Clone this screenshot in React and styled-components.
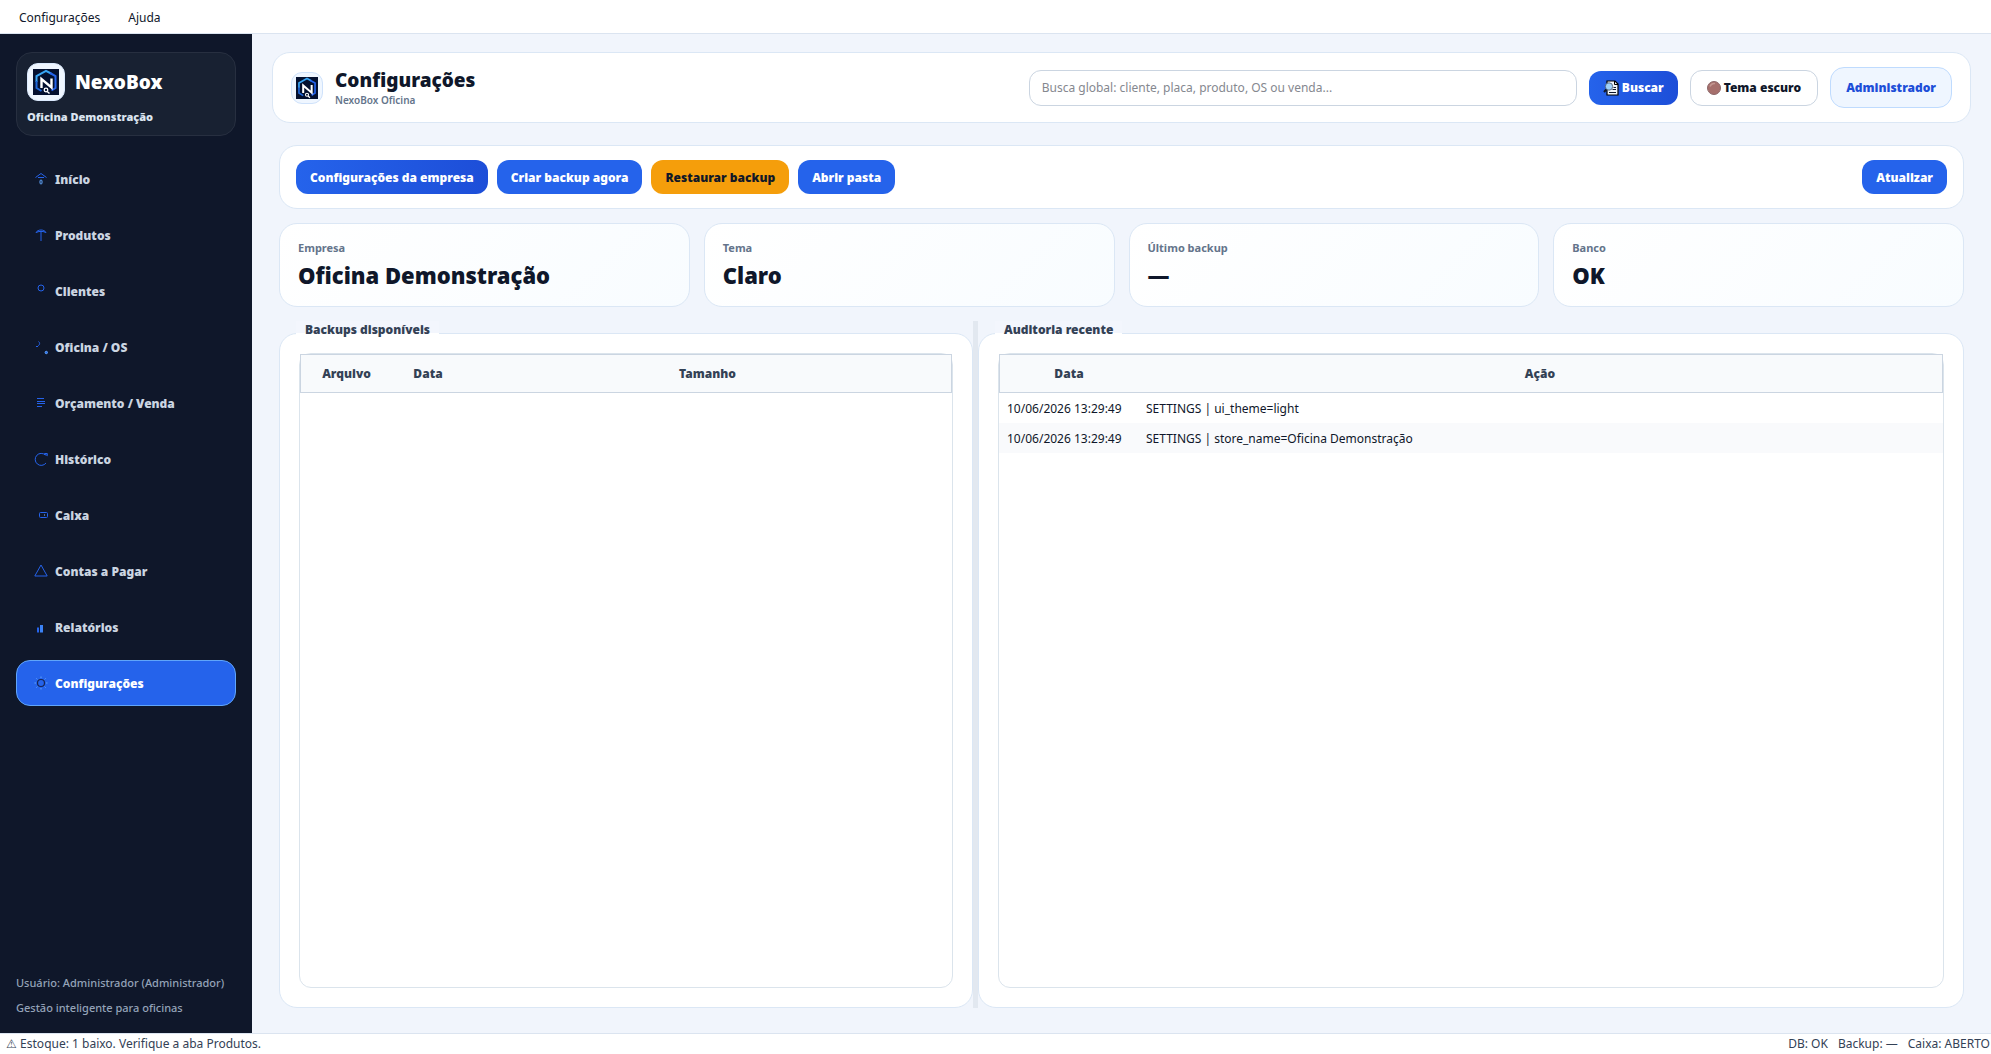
import React from "react";
import styled, { createGlobalStyle } from "styled-components";

const NAV = [
    { name: "Início", icon: "home" },
    { name: "Produtos", icon: "products" },
    { name: "Clientes", icon: "clients" },
    { name: "Oficina / OS", icon: "workshop" },
    { name: "Orçamento / Venda", icon: "quote" },
    { name: "Histórico", icon: "history" },
    { name: "Caixa", icon: "cash" },
    { name: "Contas a Pagar", icon: "bills" },
    { name: "Relatórios", icon: "reports" },
    { name: "Configurações", icon: "settings", active: true },
];

const STATS = [
    { label: "Empresa", value: "Oficina Demonstração" },
    { label: "Tema", value: "Claro" },
    { label: "Último backup", value: "—" },
    { label: "Banco", value: "OK" },
];

const AUDIT = [
    { date: "10/06/2026 13:29:49", action: "SETTINGS | ui_theme=light" },
    { date: "10/06/2026 13:29:49", action: "SETTINGS | store_name=Oficina Demonstração" },
];

const shapes = {
    home: (
        <>
            <path d="M2.5 6.5 8 2.5l5.5 4M5 6.5h6" />
            <rect x="7" y="9" width="2" height="4" rx="1" stroke="#60a5fa" />
        </>
    ),
    products: <path d="M3 5.5C4 3.8 6 3 8 3s4 .8 5 2.5M3 5.5l3-1h4l3 1M8 4.500V14" />,
    clients: <circle cx="8" cy="5" r="3" />,
    workshop: (
        <>
            <path d="M5.500 2.500c2 1.500 1 4-.5 4M3 7.500h2" />
            <circle cx="13.300" cy="13.500" r="1.200" fill="#2563eb" stroke="#60a5fa" />
        </>
    ),
    quote: <path d="M4 3.500h7M4 6.500h8M4 8.500h8M4 11.500h5" />,
    history: (
        <>
            <path d="M12.500 4.200A6 6 0 1 0 13 12" />
            <path d="M11.500 2.500h2.800v2.200z" />
        </>
    ),
    cash: (
        <>
            <rect x="6.500" y="5.500" width="8" height="5" rx="1" />
            <path d="M11 8h1" stroke="#93c5fd" />
        </>
    ),
    bills: <path d="M8 2 14.200 13H1.800z" />,
    reports: (
        <>
            <path d="M5 13.500v-5" stroke="#2563eb" strokeWidth="2" />
            <path d="M8.500 13.500V6" stroke="#3b82f6" strokeWidth="3" />
        </>
    ),
    settings: (
        <>
            <circle cx="8" cy="8" r="3.500" stroke="#172554" strokeWidth="1.200" />
            <path
                d="M8 1.500v1.500M8 13v1.500M1.500 8H3M13 8h1.500M3.400 3.400l1 1M11.600 11.600l1 1M3.400 12.600l1-1M11.600 4.400l1-1"
                stroke="#60a5fa"
            />
        </>
    ),
};

function NavIcon({ name }) {
    return (
        <svg width="16" height="16" viewBox="0 0 16 16" fill="none" stroke="#2563eb" strokeWidth="1" aria-hidden="true">
            {shapes[name]}
        </svg>
    );
}

function Logo({ size }) {
    return (
        <svg width={size} height={size} viewBox="0 0 26 26" fill="none" aria-hidden="true">
            <rect width="26" height="26" fill="#04102f" />
            <path d="M3.500 13V7L13 1.800l5 2.700" stroke="#38a5f5" strokeWidth="2" />
            <path d="M17 4l5.500 3v12l-4 2.500" stroke="#2563eb" strokeWidth="2" />
            <path d="M3.500 12v7l5 3" stroke="#1e66d8" strokeWidth="2" />
            <path d="M8.500 19V10l10 8.500V9.500" stroke="#fff" strokeWidth="2.400" />
            <circle cx="13" cy="21" r="1.800" stroke="#fff" strokeWidth="1.300" />
            <path d="M14.200 22.500l2.300 2" stroke="#fff" strokeWidth="1.500" />
        </svg>
    );
}

function SearchIcon() {
    return (
        <svg width="16" height="16" viewBox="0 0 16 16" fill="none" aria-hidden="true">
            <path d="M4 1h8l3 3v11H4z" fill="#f1f5f9" stroke="#000" strokeWidth="1.200" />
            <path d="M11.500 1v3.500H15" stroke="#000" />
            <path d="M10.500 7.500H13M9.500 9.500H13M6 12.500h7" stroke="#0f172a" />
            <circle cx="6" cy="6.500" r="3.700" fill="#9fd0f8" stroke="#475569" strokeWidth=".8" />
            <path d="M3.300 9.500 1 12" stroke="#0f172a" strokeWidth="2" />
        </svg>
    );
}

function MoonIcon() {
    return (
        <svg width="14" height="14" viewBox="0 0 14 14" aria-hidden="true">
            <circle cx="7" cy="7" r="6.500" fill="#a66f6c" stroke="#8c6668" />
            <path d="M3 5.500A4.500 4.500 0 0 1 8 2.500" fill="none" stroke="#c39691" strokeWidth="1.500" />
        </svg>
    );
}

function App() {
    return (
        <>
            <GlobalStyle />
            <Window>
                <MenuBar>
                    <MenuItem type="button">Configurações</MenuItem>
                    <MenuItem type="button">Ajuda</MenuItem>
                </MenuBar>
                <Body>
                    <Sidebar>
                        <Brand>
                            <BrandTop>
                                <LogoTile $size={38}>
                                    <Logo size={26} />
                                </LogoTile>
                                <BrandName>NexoBox</BrandName>
                            </BrandTop>
                            <BrandStore>Oficina Demonstração</BrandStore>
                        </Brand>
                        <Nav>
                            {NAV.map((item) => (
                                <NavLink key={item.name} href="#" $active={item.active}>
                                    <NavIcon name={item.icon} />
                                    {item.name}
                                </NavLink>
                            ))}
                        </Nav>
                        <SideFooter>
                            <p>Usuário: Administrador (Administrador)</p>
                            <p>Gestão inteligente para oficinas</p>
                        </SideFooter>
                    </Sidebar>
                    <Main>
                        <Header>
                            <LogoTile $size={32} $outlined>
                                <Logo size={22} />
                            </LogoTile>
                            <HeaderText>
                                <Title>Configurações</Title>
                                <Subtitle>NexoBox Oficina</Subtitle>
                            </HeaderText>
                            <Search
                                type="text"
                                aria-label="Busca global"
                                placeholder="Busca global: cliente, placa, produto, OS ou venda..."
                            />
                            <Button type="button" $kind="gradient">
                                <SearchIcon />
                                Buscar
                            </Button>
                            <Button type="button" $kind="outline">
                                <MoonIcon />
                                Tema escuro
                            </Button>
                            <UserBadge>Administrador</UserBadge>
                        </Header>
                        <Content>
                            <Toolbar>
                                <Button type="button" $kind="gradient">Configurações da empresa</Button>
                                <Button type="button">Criar backup agora</Button>
                                <Button type="button" $kind="warning">Restaurar backup</Button>
                                <Button type="button">Abrir pasta</Button>
                                <Spacer />
                                <Button type="button">Atualizar</Button>
                            </Toolbar>
                            <Stats>
                                {STATS.map((s) => (
                                    <StatCard key={s.label}>
                                        <StatLabel>{s.label}</StatLabel>
                                        <StatValue>{s.value}</StatValue>
                                    </StatCard>
                                ))}
                            </Stats>
                            <Splitter>
                                <Group>
                                    <GroupTitle>Backups disponíveis</GroupTitle>
                                    <GroupBox>
                                        <TableFrame>
                                            <Table>
                                                <colgroup>
                                                    <Col $w="92px" />
                                                    <Col $w="72px" />
                                                    <Col />
                                                </colgroup>
                                                <thead>
                                                    <tr>
                                                        <Th>Arquivo</Th>
                                                        <Th>Data</Th>
                                                        <Th>Tamanho</Th>
                                                    </tr>
                                                </thead>
                                            </Table>
                                        </TableFrame>
                                    </GroupBox>
                                </Group>
                                <Handle />
                                <Group>
                                    <GroupTitle>Auditoria recente</GroupTitle>
                                    <GroupBox>
                                        <TableFrame>
                                            <Table>
                                                <colgroup>
                                                    <Col $w="139px" />
                                                    <Col />
                                                </colgroup>
                                                <thead>
                                                    <tr>
                                                        <Th>Data</Th>
                                                        <Th>Ação</Th>
                                                    </tr>
                                                </thead>
                                                <tbody>
                                                    {AUDIT.map((row) => (
                                                        <Tr key={row.action}>
                                                            <Td>{row.date}</Td>
                                                            <Td>{row.action}</Td>
                                                        </Tr>
                                                    ))}
                                                </tbody>
                                            </Table>
                                        </TableFrame>
                                    </GroupBox>
                                </Group>
                            </Splitter>
                        </Content>
                    </Main>
                </Body>
                <StatusBar>
                    <span>⚠ Estoque: 1 baixo. Verifique a aba Produtos.</span>
                    <StatusRight>
                        <span>DB: OK</span>
                        <span>Backup: —</span>
                        <span>Caixa: ABERTO</span>
                    </StatusRight>
                </StatusBar>
            </Window>
        </>
    );
}

export default App;

const GlobalStyle = createGlobalStyle`
    * {
        box-sizing: border-box;
    }
    body {
        margin: 0;
        font-family: "Noto Sans", sans-serif;
        font-size: 12px;
        color: #0f172a;
    }
    h1, h2, p {
        margin: 0;
    }
    button, input {
        font-family: inherit;
        font-size: inherit;
    }
`;

const Window = styled.div`
    display: flex;
    flex-direction: column;
    min-height: 100vh;
    background: #f1f5fc;
`;
const MenuBar = styled.header`
    display: flex;
    gap: 12px;
    height: 34px;
    padding: 2px 11px 0;
    background: #fff;
    border-bottom: 1px solid #dbe4f0;
`;
const MenuItem = styled.button`
    padding: 0 8px;
    border: 0;
    background: none;
    color: #0f172a;
`;
const Body = styled.div`
    display: flex;
    flex: 1;
`;
const Sidebar = styled.aside`
    display: flex;
    flex-direction: column;
    flex: 0 0 252px;
    padding: 18px 16px 13px;
    background: #0f172a;
`;
const Brand = styled.div`
    height: 84px;
    padding: 10px;
    margin-bottom: 20px;
    background: #182132;
    border: 1px solid #272f40;
    border-radius: 16px;
`;
const BrandTop = styled.div`
    display: flex;
    align-items: center;
    gap: 10px;
`;
const LogoTile = styled.div`
    display: flex;
    align-items: center;
    justify-content: center;
    flex: none;
    width: ${(p) => p.$size}px;
    height: ${(p) => p.$size}px;
    background: #eff6ff;
    border: 1px solid ${(p) => (p.$outlined ? "#cfe2fb" : "#dbeafe")};
    border-radius: 11px;
`;
const BrandName = styled.strong`
    font-size: 19px;
    font-weight: 900;
    color: #fff;
`;
const BrandStore = styled.p`
    margin-top: 8px;
    font-size: 11px;
    line-height: 16px;
    font-weight: 900;
    color: #dbe4f0;
`;
const Nav = styled.nav`
    display: flex;
    flex-direction: column;
    gap: 10px;
`;
const NavLink = styled.a`
    display: flex;
    align-items: center;
    gap: 6px;
    height: 46px;
    padding: 0 16px;
    border: 1px solid ${(p) => (p.$active ? "#60a5fa" : "transparent")};
    border-radius: 14px;
    background: ${(p) => (p.$active ? "#2563eb" : "none")};
    color: ${(p) => (p.$active ? "#fff" : "#cbd5e1")};
    font-weight: 900;
    text-decoration: none;
`;
const SideFooter = styled.footer`
    margin-top: auto;
    font-size: 11px;
    font-weight: 500;
    line-height: 25px;
    color: #94a3b8;
    white-space: nowrap;
`;
const Main = styled.main`
    display: flex;
    flex-direction: column;
    flex: 1;
    min-width: 0;
    padding: 18px 20px 25px;
`;
const Header = styled.section`
    display: flex;
    align-items: center;
    gap: 12px;
    height: 71px;
    padding: 0 18px;
    background: #fff;
    border: 1px solid #dbe7f5;
    border-radius: 18px;
`;
const HeaderText = styled.div`
    flex: 1;
`;
const Title = styled.h1`
    font-size: 19px;
    font-weight: 900;
    line-height: 24px;
`;
const Subtitle = styled.p`
    font-size: 10px;
    font-weight: 600;
    line-height: 16px;
    color: #64748b;
`;
const Search = styled.input`
    width: 33%;
    height: 36px;
    padding: 0 12px;
    border: 1px solid #cbd5e1;
    border-radius: 12px;
    background: #fff;
    &::placeholder {
        color: #85888f;
    }
`;
const fills = {
    gradient: "linear-gradient(90deg, #2563eb, #1d4ed8)",
    outline: "#fff",
    warning: "#f59e0b",
};
const inks = {
    outline: "#0f172a",
    warning: "#111827",
};
const Button = styled.button`
    display: flex;
    align-items: center;
    gap: 3px;
    height: ${(p) => (p.$kind === "outline" ? 36 : 34)}px;
    padding: 0 ${(p) => (p.$kind === "outline" ? 16 : 14)}px;
    border: ${(p) => (p.$kind === "outline" ? "1px solid #cbd5e1" : "0")};
    border-radius: 12px;
    background: ${(p) => fills[p.$kind] || "#2563eb"};
    color: ${(p) => inks[p.$kind] || "#fff"};
    font-weight: 900;
    white-space: nowrap;
`;
const UserBadge = styled.span`
    padding: 0 15px;
    border: 1px solid #bfdbfe;
    border-radius: 14px;
    background: #eff6ff;
    color: #1d4ed8;
    font-weight: 900;
    line-height: 39px;
`;
const Content = styled.div`
    display: flex;
    flex-direction: column;
    flex: 1;
    gap: 14px;
    padding: 22px 7px 0;
`;
const Toolbar = styled.section`
    display: flex;
    align-items: center;
    gap: 9px;
    height: 64px;
    padding: 0 16px;
    background: #fff;
    border: 1px solid #dbe7f5;
    border-radius: 18px;
`;
const Spacer = styled.div`
    flex: 1;
`;
const Stats = styled.section`
    display: grid;
    grid-template-columns: repeat(4, 1fr);
    gap: 14px;
`;
const StatCard = styled.div`
    height: 84px;
    padding: 15px 18px;
    background: linear-gradient(135deg, #fff, #f8fcff);
    border: 1px solid #dbe7f5;
    border-radius: 18px;
`;
const StatLabel = styled.p`
    font-size: 11px;
    font-weight: 700;
    line-height: 18px;
    color: #64748b;
`;
const StatValue = styled.p`
    margin-top: 3px;
    font-size: 22px;
    font-weight: 900;
    line-height: 30px;
`;
const Splitter = styled.section`
    display: grid;
    grid-template-columns: 694fr 5px 986fr;
    flex: 1;
`;
const Handle = styled.div`
    background: #e2e8f0;
`;
const Group = styled.div`
    display: flex;
    flex-direction: column;
`;
const GroupTitle = styled.h2`
    position: relative;
    align-self: flex-start;
    margin: 0 0 -6px 17px;
    padding: 0 9px;
    background: linear-gradient(#f3f6fd 12px, #fff 12px);
    font-size: 12px;
    font-weight: 900;
    line-height: 18px;
    color: #334155;
`;
const GroupBox = styled.div`
    display: flex;
    flex: 1;
    padding: 19px;
    background: #fff;
    border: 1px solid #dbe7f5;
    border-radius: 18px;
`;
const TableFrame = styled.div`
    flex: 1;
    border: 1px solid #dbe4ec;
    border-radius: 12px;
`;
const Table = styled.table`
    width: 100%;
    table-layout: fixed;
    border-spacing: 0;
`;
const Col = styled.col`
    width: ${(p) => p.$w || "auto"};
`;
const Th = styled.th`
    height: 39px;
    padding: 0;
    border: solid #cbd5e1;
    border-width: 1px 0;
    background: #f8fafc;
    color: #334155;
    font-weight: 900;
    &:first-child {
        border-left-width: 1px;
    }
    &:last-child {
        border-right-width: 1px;
    }
`;
const Tr = styled.tr`
    &:nth-child(even) {
        background: #f9fafc;
    }
`;
const Td = styled.td`
    height: 30px;
    padding: 0 8px;
    white-space: nowrap;
`;
const StatusBar = styled.footer`
    display: flex;
    justify-content: space-between;
    height: 21px;
    padding: 0 1px 0 6px;
    background: #fff;
    border-top: 1px solid #dbe4f0;
    color: #334155;
    line-height: 20px;
`;
const StatusRight = styled.div`
    display: flex;
    gap: 10px;
`;
